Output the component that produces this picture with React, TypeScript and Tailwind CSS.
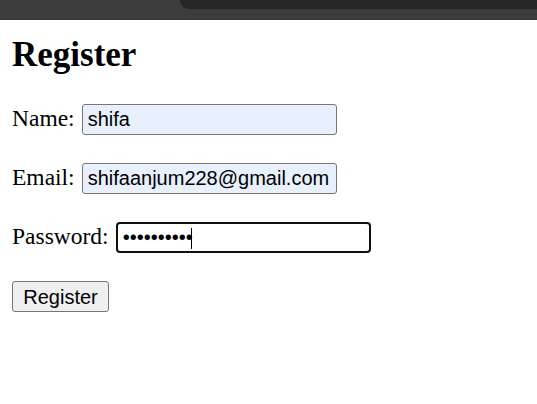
import { useState } from 'react'

const serif = "font-['Liberation_Serif','Times_New_Roman',serif]"
const sans = "font-['Liberation_Sans',Arial,sans-serif]"

function Field({
  label,
  value,
  type = 'text',
  focused = false,
}: {
  label: string
  value: string
  type?: string
  focused?: boolean
}) {
  const [v, setV] = useState(value)
  return (
    <div className="flex h-[31px] items-baseline gap-[7px]">
      <label className={`${serif} text-[23.5px] leading-none text-black`}>{label}</label>
      <div className="relative">
        <input
          type={type}
          value={v}
          onChange={(e) => setV(e.target.value)}
          className={
            focused
              ? `${sans} h-[31px] w-[255px] rounded-[4px] border-2 border-[#101010] bg-white px-[5px] text-[20px] text-black outline-none`
              : `${sans} h-[31px] w-[255px] rounded-[3px] border border-[#767676] bg-[#e8f0fe] px-[5px] text-[20px] text-black outline-none`
          }
        />
        {focused && (
          <span className="pointer-events-none absolute left-[75px] top-[6px] h-[21px] w-px bg-black" />
        )}
      </div>
    </div>
  )
}

export default function App() {
  return (
    <div className="min-h-[404px] bg-white">
      <div className="relative h-[20px] border-b-2 border-[#383838] bg-[#3c3c3c]">
        <div className="absolute left-[180px] right-0 top-0 h-[9px] rounded-bl-[14px] bg-[#262626]" />
      </div>
      <div className="flex flex-col px-[12px]">
        <h1 className={`${serif} mt-[17px] text-[35px] font-bold leading-[35px] text-black`}>Register</h1>
        <div className="mt-[32px] flex flex-col gap-[28px]">
          <Field label="Name:" value="shifa" />
          <Field label="Email:" value="shifaanjum228@gmail.com" />
          <Field label="Password:" value="shifa12345" type="password" focused />
          <div>
            <button
              type="button"
              className={`${sans} h-[31px] w-[97px] rounded-[3px] border border-[#767676] bg-[#efefef] text-[20px] text-black`}
            >
              Register
            </button>
          </div>
        </div>
      </div>
    </div>
  )
}
